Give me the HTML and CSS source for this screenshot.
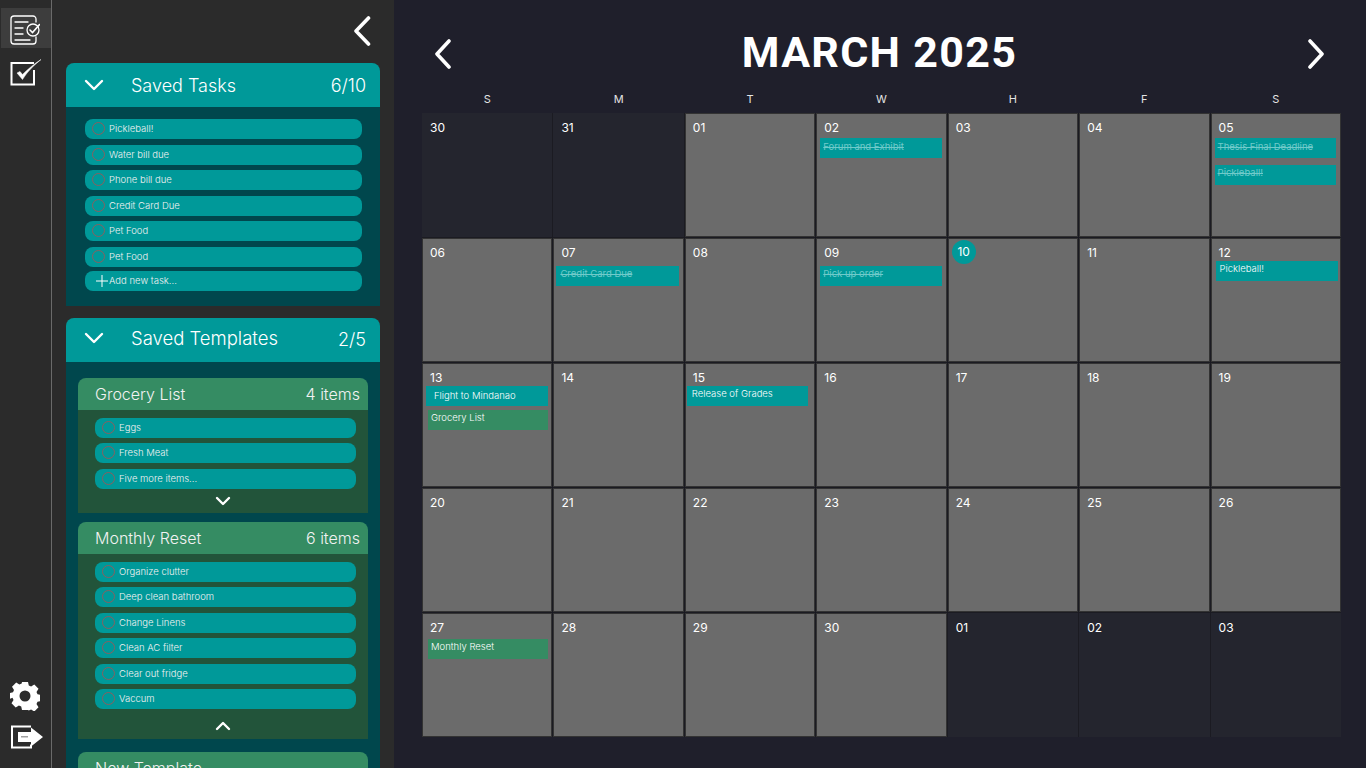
FILE: index.html
```html
<!DOCTYPE html>
<html lang="en">
<head>
    <meta charset="UTF-8">
    <title>Calendar</title>
    <link rel="stylesheet" href="styles.css">
</head>
<body>
<div class="app">
    <nav class="rail">
        <div class="rail-top">
            <a class="rail-btn rail-btn--active">
                <svg width="32" height="32" viewBox="0 0 32 32" fill="none" stroke="#fff" stroke-width="1.3" stroke-linecap="round">
                    <path d="M28 8V5a3 3 0 0 0-3-3H12M12 2H6a3 3 0 0 0-3 3v22a3 3 0 0 0 3 3h19a3 3 0 0 0 3-3v-4"/>
                    <path d="M7 8h13M7 14h8M7 20h8M7 26h15"/>
                    <circle cx="25" cy="16" r="6"/>
                    <path d="M22 16l2.500 2.500 7-8" stroke-width="1.600"/>
                </svg>
            </a>
            <a class="rail-btn rail-btn--plain">
                <svg width="34" height="30" viewBox="0 0 34 30" fill="none" stroke="#fff" stroke-width="2">
                    <path d="M25 12v14.500H2.500V5H25"/>
                    <path d="M8 15l5.500 6.500C18 14 25 7 32 1.500 25 6 19 11 13.500 16.500L11 13.500z" fill="#fff" stroke-width="0.500"/>
                </svg>
            </a>
        </div>
        <div class="rail-bottom">
            <svg class="gear" width="30" height="30" viewBox="0 0 30 30">
                <path fill="#fff" fill-rule="evenodd" d="M12 1h6l.8 3.600 2.300 1 3.200-2 4.200 4.200-2 3.200 1 2.300 3.500.7v6l-3.500.8-1 2.300 2 3.200-4.200 4.200-3.200-2-2.300 1L18 29h-6l-.8-3.500-2.300-1-3.200 2-4.200-4.200 2-3.200-1-2.300L-.500 18v-6l3.500-.7 1-2.300-2-3.200 4.200-4.200 3.200 2 2.300-1zM15 9.500a5.500 5.500 0 1 0 0 11 5.500 5.500 0 0 0 0-11z"/>
            </svg>
            <svg class="exit" width="34" height="24" viewBox="0 0 34 24">
                <path d="M21 1.500H2v21h19v-3" fill="none" stroke="#fff" stroke-width="2"/>
                <path d="M8 7h13V2.500L33 12 21 21.500V17H8z" fill="#fff"/>
                <path d="M11 11h7v1.500h-7z" fill="#a0a0a0"/>
            </svg>
        </div>
    </nav>

    <aside class="sidebar">
        <div class="collapse-row">
            <svg width="18" height="30" viewBox="0 0 18 30" fill="none" stroke="#fff" stroke-width="3.600" stroke-linecap="round" stroke-linejoin="round"><path d="M15.500 2L3 15l12.500 13"/></svg>
        </div>

        <section class="panel">
            <header class="panel-head">
                <svg class="chev" width="20" height="12" viewBox="0 0 20 12"><path d="M2 2l8 8 8-8"/></svg>
                <h2>Saved Tasks</h2>
                <span class="count">6/10</span>
            </header>
            <div class="panel-body task-list">
                <div class="task"><i class="radio"></i>Pickleball!</div>
                <div class="task"><i class="radio"></i>Water bill due</div>
                <div class="task"><i class="radio"></i>Phone bill due</div>
                <div class="task"><i class="radio"></i>Credit Card Due</div>
                <div class="task"><i class="radio"></i>Pet Food</div>
                <div class="task"><i class="radio"></i>Pet Food</div>
                <div class="task task--add"><svg width="12" height="12" viewBox="0 0 12 12" stroke="#fff" stroke-width="1"><path d="M6 0v12M0 6h12"/></svg>Add new task...</div>
            </div>
        </section>

        <section class="panel">
            <header class="panel-head panel-head--raised">
                <svg class="chev" width="20" height="12" viewBox="0 0 20 12"><path d="M2 2l8 8 8-8"/></svg>
                <h2>Saved Templates</h2>
                <span class="count">2/5</span>
            </header>
            <div class="panel-body templates">
                <div class="template">
                    <header class="template-head"><h3>Grocery List</h3><span>4 items</span></header>
                    <div class="template-body">
                        <div class="task"><i class="radio"></i>Eggs</div>
                        <div class="task"><i class="radio"></i>Fresh Meat</div>
                        <div class="task"><i class="radio"></i>Five more items...</div>
                        <svg class="chev chev--small" width="16" height="10" viewBox="0 0 16 10"><path d="M2 2l6 6 6-6"/></svg>
                    </div>
                </div>
                <div class="template">
                    <header class="template-head"><h3>Monthly Reset</h3><span>6 items</span></header>
                    <div class="template-body">
                        <div class="task"><i class="radio"></i>Organize clutter</div>
                        <div class="task"><i class="radio"></i>Deep clean bathroom</div>
                        <div class="task"><i class="radio"></i>Change Linens</div>
                        <div class="task"><i class="radio"></i>Clean AC filter</div>
                        <div class="task"><i class="radio"></i>Clear out fridge</div>
                        <div class="task"><i class="radio"></i>Vaccum</div>
                        <svg class="chev chev--small chev--up" width="16" height="10" viewBox="0 0 16 10"><path d="M2 8l6-6 6 6"/></svg>
                    </div>
                </div>
                <div class="template template--new">
                    <header class="template-head"><h3>New Template</h3></header>
                </div>
            </div>
        </section>
    </aside>

    <main class="calendar">
        <header class="cal-head">
            <svg width="18" height="30" viewBox="0 0 18 30" fill="none" stroke="#fff" stroke-width="3.600" stroke-linecap="round" stroke-linejoin="round"><path d="M15 2L3 15l12 13"/></svg>
            <h1>MARCH 2025</h1>
            <svg width="18" height="30" viewBox="0 0 18 30" fill="none" stroke="#fff" stroke-width="3.600" stroke-linecap="round" stroke-linejoin="round"><path d="M3 2l12 13L3 28"/></svg>
        </header>
        <div class="weekdays">
            <span>S</span><span>M</span><span>T</span><span>W</span><span>H</span><span>F</span><span>S</span>
        </div>
        <div class="grid">
            <div class="day day--off"><b>30</b></div>
            <div class="day day--off"><b>31</b></div>
            <div class="day"><b>01</b></div>
            <div class="day"><b>02</b><div class="event event--done event--top">Forum and Exhibit</div></div>
            <div class="day"><b>03</b></div>
            <div class="day"><b>04</b></div>
            <div class="day"><b>05</b><div class="event event--done event--top">Thesis Final Deadline</div><div class="event event--done event--gap">Pickleball!</div></div>

            <div class="day"><b>06</b></div>
            <div class="day"><b>07</b><div class="event event--done event--low event--left">Credit Card Due</div></div>
            <div class="day"><b>08</b></div>
            <div class="day"><b>09</b><div class="event event--done event--low">Pick up order</div></div>
            <div class="day"><b class="today">10</b></div>
            <div class="day"><b>11</b></div>
            <div class="day"><b>12</b><div class="event event--right">Pickleball!</div></div>

            <div class="day"><b>13</b><div class="event event--pad">Flight to Mindanao</div><div class="event event--green">Grocery List</div></div>
            <div class="day"><b>14</b></div>
            <div class="day"><b>15</b><div class="event event--far-left">Release of Grades</div></div>
            <div class="day"><b>16</b></div>
            <div class="day"><b>17</b></div>
            <div class="day"><b>18</b></div>
            <div class="day"><b>19</b></div>

            <div class="day"><b>20</b></div>
            <div class="day"><b>21</b></div>
            <div class="day"><b>22</b></div>
            <div class="day"><b>23</b></div>
            <div class="day"><b>24</b></div>
            <div class="day"><b>25</b></div>
            <div class="day"><b>26</b></div>

            <div class="day"><b>27</b><div class="event event--green">Monthly Reset</div></div>
            <div class="day"><b>28</b></div>
            <div class="day"><b>29</b></div>
            <div class="day"><b>30</b></div>
            <div class="day day--off"><b>01</b></div>
            <div class="day day--off"><b>02</b></div>
            <div class="day day--off"><b>03</b></div>
        </div>
    </main>
</div>
</body>
</html>
```

FILE: styles.css
```css
* {
    box-sizing: border-box;
}

html, body {
    height: 100%;
    margin: 0;
}

body {
    font-family: "Inter", "Open Sans", sans-serif;
    color: #fff;
    background: #1f1f2b;
    overflow: hidden;
}

h1, h2, h3 {
    margin: 0;
    font-weight: 400;
}

.app {
    display: flex;
    height: 768px;
}

/* icon rail */
.rail {
    width: 52px;
    flex: none;
    background: #2b2b2b;
    border-right: 1px solid #6a6a6a;
    display: flex;
    flex-direction: column;
    justify-content: space-between;
    padding-top: 8px;
}

.rail-btn {
    display: flex;
    align-items: center;
    justify-content: center;
    height: 40px;
    margin-left: 1px;
}

.rail-btn--active {
    background: #3d3d3d;
    padding: 4px 5px 0 0;
}

.rail-btn--plain {
    height: 44px;
    padding-top: 6px;
}

.rail-bottom {
    display: flex;
    flex-direction: column;
    align-items: center;
    gap: 14px;
    padding-bottom: 19px;
}

.gear {
    margin-right: 2px;
}

.exit {
    margin-left: 2px;
}

/* sidebar */
.sidebar {
    width: 342px;
    flex: none;
    background: #2b2b2b;
    padding: 0 14px;
    overflow: hidden;
}

.collapse-row {
    height: 63px;
    display: flex;
    justify-content: flex-end;
    align-items: flex-start;
    padding: 16px 9px 0 0;
}

.panel {
    margin-bottom: 12px;
}

.panel-head {
    height: 44px;
    background: #009999;
    border-radius: 8px 8px 0 0;
    display: flex;
    align-items: center;
    padding: 0 14px 0 18px;
}

.panel-head h2 {
    flex: 1;
    font-size: 18px;
    font-weight: 300;
    margin-left: 27px;
}

.panel-head--raised h2 {
    margin-bottom: 4px;
    font-size: 18.500px;
}

.panel-head--raised .chev {
    margin-bottom: 4px;
}

.panel-head--raised .count {
    margin-bottom: 2px;
}

.count {
    font-size: 18px;
    font-weight: 300;
}

.chev {
    fill: none;
    stroke: #fff;
    stroke-width: 2.400;
    stroke-linecap: round;
    stroke-linejoin: round;
}

.panel-body {
    background: #00474d;
}

.task-list {
    padding: 12px 18px 15px 19px;
}

.task {
    height: 20px;
    flex: none;
    margin-bottom: 5.500px;
    padding: 0 0 1px 7px;
    background: #009999;
    border-radius: 8px;
    display: flex;
    align-items: center;
    gap: 4px;
    font-size: 9.500px;
    font-weight: 300;
    color: #f2f2f2;
}

.task--add {
    margin: -1px 0 0;
    padding-left: 11px;
    gap: 1px;
}

.radio {
    width: 13px;
    height: 13px;
    flex: none;
    border: 1px solid #8a5f5f;
    border-radius: 50%;
}

.templates {
    padding: 16px 12px 0;
}

.template {
    margin-bottom: 9px;
}

.template--new {
    margin-top: 13px;
}

.template-head {
    height: 31.500px;
    padding: 0 8px 0 17px;
    background: #358c63;
    border-radius: 8px 8px 0 0;
    display: flex;
    align-items: center;
    justify-content: space-between;
    font-size: 16px;
    font-weight: 300;
    color: #f2f2f2;
}

.template-head h3 {
    font-size: 16px;
    font-weight: 300;
}

.template-body {
    background: #22543a;
    padding: 8px 12px 7px 17px;
    display: flex;
    flex-direction: column;
}

.chev--small {
    align-self: center;
    flex: none;
    margin: 2px 5px 0 0;
}

.chev--up {
    margin-top: 6px;
    margin-bottom: 1.500px;
}

/* calendar */
.calendar {
    flex: 1;
    padding: 0 25px 0 28px;
}

.cal-head {
    height: 92px;
    display: flex;
    align-items: center;
    justify-content: space-between;
    padding: 12px 16px 0 12px;
}

.cal-head svg {
    margin-top: 4px;
}

.cal-head h1 {
    font-family: "Roboto", "Inter", sans-serif;
    font-size: 43px;
    font-weight: 700;
    letter-spacing: 1.300px;
}

.weekdays {
    display: grid;
    grid-template-columns: repeat(7, 1fr);
    gap: 1px;
    height: 21px;
    font-size: 11px;
    text-align: center;
    color: #e4e4e4;
}

.grid {
    display: grid;
    grid-template-columns: repeat(7, 1fr);
    grid-template-rows: repeat(5, 124px);
    gap: 1px;
    background: #1b1b22;
}

.day {
    background: #6b6b6b;
    border: 1px solid #333;
    padding: 6px 4px 0 3px;
    font-size: 12px;
    font-weight: 300;
}

.day--off {
    background: #24252e;
    border-color: #24252e;
}

.day b {
    display: block;
    height: 15px;
    line-height: 15px;
    margin-left: 4px;
    font-weight: 400;
}

.day .today {
    background: #009999;
    border-radius: 50%;
    width: 24px;
    height: 24px;
    line-height: 24px;
    margin: -5px 0 -4px 0;
    text-align: center;
}

.event {
    height: 20px;
    margin-top: 1px;
    padding: 1px 3px;
    background: #009999;
    font-size: 9.500px;
    font-weight: 300;
    line-height: 14px;
    color: #fff;
}

.event--done {
    color: #6fcaca;
    font-weight: 400;
    text-decoration: line-through;
}

.event--top {
    margin-top: 3px;
    padding-top: 2px;
}

.event--gap {
    margin-top: 7px;
}

.event--low {
    margin-top: 6px;
}

.event--left {
    margin-left: -1px;
    padding-left: 4px;
}

.event--right {
    margin: 1px -2px 0 1px;
    padding-left: 4px;
}

.event--far-left {
    margin-left: -2px;
    margin-right: 2px;
    padding-left: 5px;
}

.event--pad {
    margin-right: -1px;
    padding: 3px 0 0 8px;
}

.event--green {
    background: #358c63;
    margin: 4px -1px 0 2px;
}
```
